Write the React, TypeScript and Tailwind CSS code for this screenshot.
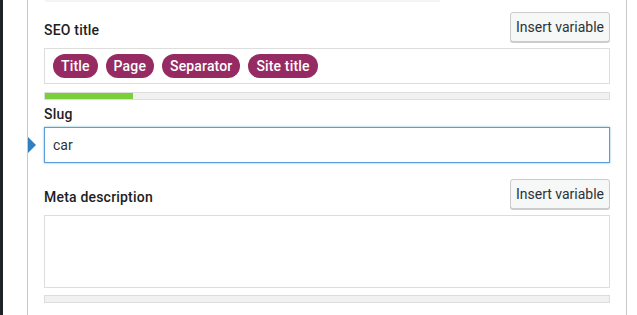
import React from "react";

const pills = ["Title", "Page", "Separator", "Site title"];

const InsertButton = () => (
  <button className="h-[30px] w-[100px] shrink-0 rounded-[3px] border border-[#cccccc] bg-[#f6f7f7] text-[14px] text-[#2c3338] shadow-[0_1px_0_#cccccc]">
    Insert variable
  </button>
);

const Progress = ({ value }: { value: number }) => (
  <div className="h-[8px] w-full border border-[#dddddd] bg-[#f1f1f1]">
    <div className="h-full bg-[#7ad03a]" style={{ width: `${value}px` }} />
  </div>
);

export default function App() {
  return (
    <div
      className="flex h-[315px] w-[637px] overflow-hidden bg-white text-[#1e1e1e]"
      style={{ fontFamily: "Roboto, 'Liberation Sans', Arial, sans-serif" }}
    >
      <div className="w-[3px] shrink-0 bg-[#1d2327]" />
      <div className="w-[24px] shrink-0 bg-white" />

      <div className="relative w-[600px] shrink-0 border-x border-[#c9c9c9] px-[16px]">
        {/* shadow of the box above */}
        <div className="absolute left-[17px] top-0 h-[2px] w-[395px] bg-[#f4f4f4]" />

        {/* SEO title */}
        <div className="mt-[12px] flex items-end justify-between">
          <label className="mb-[2px] text-[14px] font-medium leading-[20px] tracking-[0.2px]">SEO title</label>
          <InsertButton />
        </div>
        <div className="mt-[6px] flex h-[36px] items-center gap-[8px] border border-[#dddddd] pl-[8px]">
          {pills.map((p) => (
            <span
              key={p}
              className="flex h-[24px] items-center rounded-full bg-[#962a62] px-[8px] text-[14px] font-medium tracking-[0.15px] text-white"
            >
              {p}
            </span>
          ))}
        </div>
        <div className="mt-[8px]">
          <Progress value={88} />
        </div>

        {/* Slug */}
        <label className="mt-[4px] block text-[14px] font-medium leading-[20px] tracking-[0.2px]">Slug</label>
        <div className="mt-[3px] flex h-[36px] items-center border border-[#5b9dd9] pl-[8px] text-[14px] text-[#2c3338] shadow-[0_0_2px_rgba(30,140,190,0.6)]">
          car
        </div>
        <div className="absolute left-0 top-[137px] h-0 w-0 border-y-[8px] border-l-[8px] border-y-transparent border-l-[#2f7fc1]" />

        {/* Meta description */}
        <div className="mt-[16px] flex items-end justify-between">
          <label className="mb-[2px] text-[14px] font-medium leading-[20px] tracking-[0.2px]">Meta description</label>
          <InsertButton />
        </div>
        <div className="mt-[6px] h-[73px] border border-[#dddddd]" />
        <div className="mt-[7px]">
          <Progress value={0} />
        </div>
      </div>

      <div className="flex-1 bg-white" />
    </div>
  );
}
